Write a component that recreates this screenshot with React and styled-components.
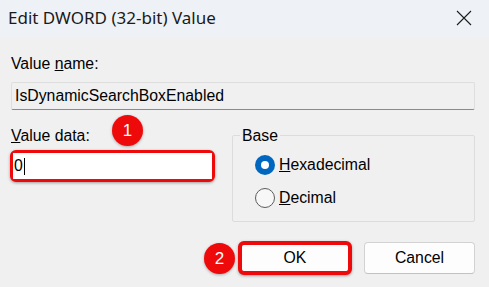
import React from 'react';
import styled, { createGlobalStyle } from 'styled-components';

const GlobalStyle = createGlobalStyle`
  html, body {
    margin: 0;
    padding: 0;
    background: #f0f0f0;
  }
  body {
    font-family: 'Liberation Sans', Arial, sans-serif;
    color: #000;
  }
`;

const Dialog = styled.div`
  width: 489px;
  height: 287px;
  display: flex;
  flex-direction: column;
  background: #f0f0f0;
  overflow: hidden;
`;

const TitleBar = styled.div`
  height: 37px;
  flex: none;
  display: flex;
  align-items: center;
  justify-content: space-between;
  padding: 0 17px 0 8px;
  background: #eef2f6;
`;

const Title = styled.span`
  font-family: 'Noto Sans', 'Open Sans', sans-serif;
  font-size: 17px;
  color: #1a1a1a;
  margin-top: -2px;
`;

const CloseIcon = () => (
  <svg width="16" height="16" viewBox="0 0 16 16" style={{ marginTop: -2 }}>
    <path d="M1 1 L15 15 M15 1 L1 15" stroke="#1c1c1c" strokeWidth="1.1" fill="none" />
  </svg>
);

const Body = styled.div`
  flex: 1;
  display: flex;
  flex-direction: column;
  padding: 18px 14px 0 11px;
`;

const Label = styled.div`
  font-size: 15.8px;
  line-height: 17px;
  height: 17px;
  white-space: nowrap;
`;

const NameField = styled.div`
  margin-top: 10px;
  height: 28px;
  box-sizing: border-box;
  border: 1px solid #dedede;
  border-bottom: 1px solid #8a8a8a;
  border-radius: 2px;
  padding: 0 0 0 3px;
  display: flex;
  align-items: center;
  font-size: 15.8px;
  background: #f0f0f0;
`;

const Row = styled.div`
  display: flex;
  margin-top: 17px;
  gap: 17px;
`;

const LeftColumn = styled.div`
  position: relative;
  width: 204px;
  display: flex;
  flex-direction: column;
`;

const Highlight = styled.div`
  position: relative;
  box-sizing: border-box;
  width: ${p => p.$w}px;
  height: ${p => p.$h}px;
  margin-top: ${p => p.$mt || 0}px;
  margin-left: ${p => p.$ml || 0}px;
  border: ${p => p.$bw || 3}px solid #ee0a0a;
  border-radius: 6px;
  box-shadow: 0 1px 3px rgba(0, 0, 0, 0.35);
  background: #fff;
  display: flex;
  align-items: center;
`;

const DataInput = styled.div`
  flex: 1;
  height: 100%;
  display: flex;
  align-items: center;
  padding-left: 1px;
  font-size: 15.8px;
  background: #fff;
`;

const Caret = styled.span`
  display: inline-block;
  width: 1px;
  height: 17px;
  background: #000;
  margin-left: 1px;
`;

const Badge = styled.div`
  position: absolute;
  left: ${p => p.$x}px;
  top: ${p => p.$y}px;
  width: 31px;
  height: 31px;
  border-radius: 50%;
  background: #ee0a0a;
  color: #fff;
  font-family: 'Liberation Sans', Arial, sans-serif;
  font-size: 17px;
  display: flex;
  align-items: center;
  justify-content: center;
  box-shadow: 0 1px 3px rgba(0, 0, 0, 0.3);
  z-index: 2;
`;

const GroupBox = styled.fieldset`
  margin: 0;
  width: 243px;
  height: 95px;
  box-sizing: border-box;
  border: 1px solid #dcdcdc;
  border-radius: 2px;
  padding: 11px 0 0 7px;
  display: flex;
  flex-direction: column;
  gap: 13px;
`;

const Legend = styled.legend`
  font-size: 15.8px;
  line-height: 17px;
  padding: 0 2px;
`;

const RadioRow = styled.label`
  display: flex;
  align-items: center;
  gap: 4px;
  margin-left: 15px;
  font-size: 15.8px;
  height: 20px;
`;

const RadioCircle = styled.span`
  box-sizing: border-box;
  width: 20px;
  height: 20px;
  border-radius: 50%;
  display: flex;
  align-items: center;
  justify-content: center;
  background: ${p => (p.$checked ? '#0067c0' : '#f7f7f7')};
  border: ${p => (p.$checked ? 'none' : '1px solid #5c5c5c')};
  &::after {
    content: '';
    display: ${p => (p.$checked ? 'block' : 'none')};
    width: 8px;
    height: 8px;
    border-radius: 50%;
    background: #fff;
  }
`;

const ButtonRow = styled.div`
  display: flex;
  justify-content: flex-end;
  align-items: flex-start;
  gap: 12px;
  margin-top: 19px;
`;

const Button = styled.div`
  box-sizing: border-box;
  width: ${p => p.$w}px;
  height: ${p => p.$h}px;
  margin-top: ${p => p.$mt || 0}px;
  display: flex;
  align-items: center;
  justify-content: center;
  font-size: 15.8px;
  background: #fdfdfd;
  border: ${p => (p.$plain ? 'none' : '1px solid #d2d2d2')};
  border-bottom-color: ${p => (p.$plain ? 'transparent' : '#c2c2c2')};
  border-radius: 4px;
  flex: ${p => (p.$plain ? 1 : 'none')};
  height: ${p => (p.$plain ? '100%' : `${p.$h}px`)};
`;

export default function App() {
  return (
    <>
      <GlobalStyle />
      <Dialog>
        <TitleBar>
          <Title>Edit DWORD (32-bit) Value</Title>
          <CloseIcon />
        </TitleBar>
        <Body>
          <Label>
            Value <u>n</u>ame:
          </Label>
          <NameField>IsDynamicSearchBoxEnabled</NameField>
          <Row>
            <LeftColumn>
              <Label>
                <u>V</u>alue data:
              </Label>
              <Highlight $w={205} $h={32} $mt={6} $ml={-1}>
                <DataInput>
                  0<Caret />
                </DataInput>
              </Highlight>
              <Badge $x={101} $y={-12}>1</Badge>
            </LeftColumn>
            <GroupBox>
              <Legend>Base</Legend>
              <RadioRow>
                <RadioCircle $checked />
                <span>
                  <u>H</u>exadecimal
                </span>
              </RadioRow>
              <RadioRow>
                <RadioCircle />
                <span>
                  <u>D</u>ecimal
                </span>
              </RadioRow>
            </GroupBox>
          </Row>
          <ButtonRow>
            <Highlight $w={114} $h={34} $bw={4}>
              <Button $plain>OK</Button>
              <Badge $x={-38} $y={-2}>2</Badge>
            </Highlight>
            <Button $w={111} $h={32} $mt={1}>
              Cancel
            </Button>
          </ButtonRow>
        </Body>
      </Dialog>
    </>
  );
}
